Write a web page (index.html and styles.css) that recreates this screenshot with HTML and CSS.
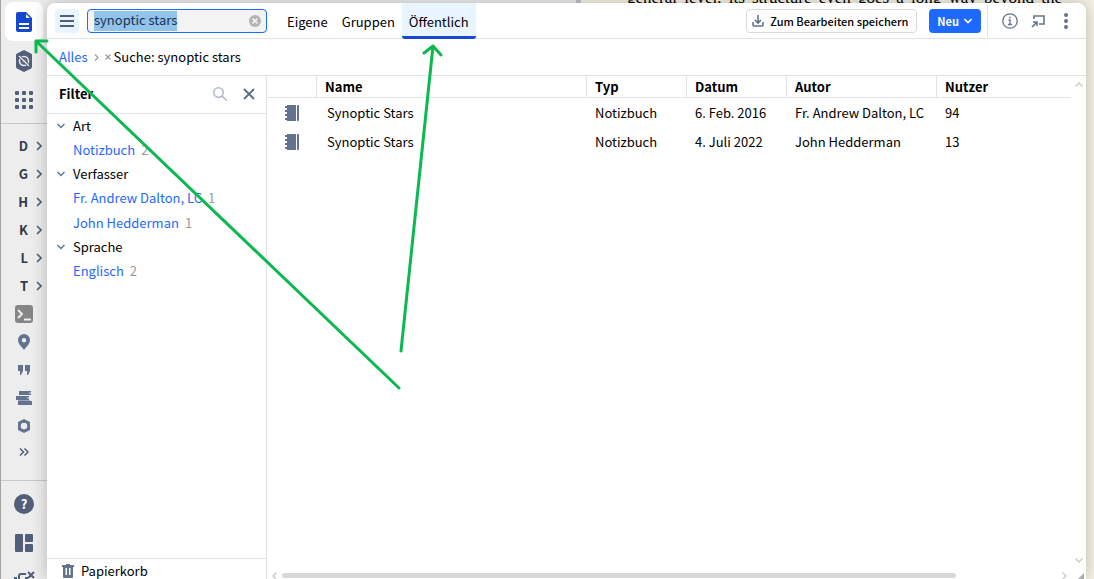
FILE: index.html
```html
<!DOCTYPE html>
<html lang="de">
<head>
<meta charset="utf-8">
<title>Dokumente</title>
<link rel="stylesheet" href="styles.css">
</head>
<body>
<div class="app">
  <div class="backdrop" aria-hidden="true">
    <div class="backdrop-gutter"></div>
    <div class="backdrop-page"><p>general level, its structure even goes a long way beyond the</p></div>
  </div>

  <nav class="rail">
    <div class="rail-top">
      <button class="tool tool-active" aria-label="Dokumente"><svg width="18" height="22" viewBox="0 0 18 22"><path fill="#1548cf" d="M3 1h8l6 6v12a2 2 0 0 1-2 2H3a2 2 0 0 1-2-2V3a2 2 0 0 1 2-2z"/><path stroke="#fff" stroke-width="2" d="M4 13h10M4 17h10"/><path fill="#fff" d="M11 3v4h4z"/></svg></button>
      <button class="tool" aria-label="Factbook"><svg width="18" height="22" viewBox="0 0 18 22"><path fill="#525f79" d="M9 0l7 3.500q1 .6 1 1.500v12q0 .9-1 1.500L9 22l-7-3.500q-1-.6-1-1.500V5q0-.9 1-1.500z"/><circle cx="9" cy="11" r="4.500" fill="none" stroke="#eee" stroke-width="1.500"/><circle cx="9" cy="11" r="1.800" fill="#eee"/><path stroke="#525f79" stroke-width="3" d="M4 6l10 10"/><path stroke="#eee" stroke-width="1.300" d="M4 6l10 10"/></svg></button>
      <button class="tool" aria-label="Werkzeuge"><svg width="20" height="20" viewBox="0 0 20 20" fill="#525f79"><rect x="1" y="1" width="4" height="4" rx="1"/><rect x="8" y="1" width="4" height="4" rx="1"/><rect x="15" y="1" width="4" height="4" rx="1"/><rect x="1" y="8" width="4" height="4" rx="1"/><rect x="8" y="8" width="4" height="4" rx="1"/><rect x="15" y="8" width="4" height="4" rx="1"/><rect x="1" y="15" width="4" height="4" rx="1"/><rect x="8" y="15" width="4" height="4" rx="1"/><rect x="15" y="15" width="4" height="4" rx="1"/></svg></button>
    </div>
    <div class="rail-mid">
      <button class="short letter">D<svg class="chev" width="6" height="10" viewBox="0 0 6 10"><path d="M1 1l4 4-4 4"/></svg></button>
      <button class="short letter">G<svg class="chev" width="6" height="10" viewBox="0 0 6 10"><path d="M1 1l4 4-4 4"/></svg></button>
      <button class="short letter">H<svg class="chev" width="6" height="10" viewBox="0 0 6 10"><path d="M1 1l4 4-4 4"/></svg></button>
      <button class="short letter">K<svg class="chev" width="6" height="10" viewBox="0 0 6 10"><path d="M1 1l4 4-4 4"/></svg></button>
      <button class="short letter">L<svg class="chev" width="6" height="10" viewBox="0 0 6 10"><path d="M1 1l4 4-4 4"/></svg></button>
      <button class="short letter">T<svg class="chev" width="6" height="10" viewBox="0 0 6 10"><path d="M1 1l4 4-4 4"/></svg></button>
      <button class="short" aria-label="Befehl"><svg width="18" height="18" viewBox="0 0 18 18"><rect width="18" height="18" rx="3" fill="#858585"/><path fill="none" stroke="#eee" stroke-width="1.900" d="M3 5l4 4-4 4M9 14.500h7"/></svg></button>
      <button class="short" aria-label="Atlas"><svg width="12" height="16" viewBox="0 0 12 16"><path fill="#63738f" fill-rule="evenodd" d="M6 0a6 6 0 0 1 6 6c0 4-4 7-6 10-2-3-6-6-6-10a6 6 0 0 1 6-6zm0 4a2.200 2.200 0 1 0 0 4.400A2.200 2.200 0 0 0 6 4z"/></svg></button>
      <button class="short" aria-label="Zitate"><svg width="12" height="10" viewBox="0 0 12 10" fill="#63738f"><path d="M0 0h5v6l-2 4H2V6H0zM7 0h5v6l-2 4H9V6H7z"/></svg></button>
      <button class="short" aria-label="Bücher"><svg width="16" height="14" viewBox="0 0 16 14"><path fill="#63738f" d="M3 0h12v4H3zM0 5h13v4H0zM2 10h14v4H2z"/><path fill="#9aa6ba" d="M13 1h2v2h-2zM11 6h2v2h-2zM2 9h12v1H2z"/></svg></button>
      <button class="short" aria-label="Sechseck"><svg width="14" height="14" viewBox="0 0 14 14"><path fill="#63738f" fill-rule="evenodd" d="M7 0l6 3v8l-6 3-6-3V3zM7 3.700a3.300 3.300 0 1 0 0 6.600 3.300 3.300 0 0 0 0-6.600z"/></svg></button>
      <button class="short more" aria-label="Mehr"><svg width="10" height="8" viewBox="0 0 10 8"><path fill="none" stroke="#525f79" stroke-width="1.500" d="M1 .5L4.500 4 1 7.500M5.500 .5L9 4 5.500 7.500"/></svg></button>
    </div>
    <div class="rail-bottom">
      <button class="tool" aria-label="Hilfe"><span class="help">?</span></button>
      <button class="tool" aria-label="Layouts"><svg width="18" height="18" viewBox="0 0 18 18" fill="#525f79"><rect width="8" height="18" rx="1"/><rect x="10" width="8" height="8" rx="1"/><rect x="10" y="10" width="8" height="8" rx="1"/></svg></button>
      <button class="tool" aria-label="Schließen"><svg width="22" height="22" viewBox="0 0 22 22" fill="none" stroke="#525f79" stroke-width="2"><path d="M6 12V5q0-2 2-2h5M15 1l6 6M21 1l-6 6M1 7h3M12 7h3"/></svg></button>
    </div>
  </nav>

  <main class="panel">
    <header class="toolbar">
      <button class="menu" aria-label="Menü"><svg width="14" height="12" viewBox="0 0 14 12"><path stroke="#4d6080" stroke-width="2" d="M0 1h14M0 6h14M0 11h14"/></svg></button>
      <div class="search">
        <label class="search-box"><mark class="selection">synoptic stars</mark><input class="search-input" type="text" aria-label="Suche"></label>
        <button class="clear" aria-label="Löschen"><svg width="12" height="12" viewBox="0 0 12 12"><circle cx="6" cy="6" r="6" fill="#b3b3b3"/><path stroke="#f3f3f3" stroke-width="1.600" d="M3.500 3.500l5 5M8.500 3.500l-5 5"/></svg></button>
      </div>
      <div class="tabs">
        <button class="tab">Eigene</button>
        <button class="tab">Gruppen</button>
        <button class="tab tab-current">Öffentlich</button>
      </div>
      <button class="save"><svg width="12" height="12" viewBox="0 0 12 12" fill="none" stroke="#63738f" stroke-width="1.600"><path d="M6 0v8M3 5l3 3 3-3M1 7v3q0 1 1 1h8q1 0 1-1V7"/></svg>Zum Bearbeiten speichern</button>
      <button class="new">Neu<svg width="8" height="6" viewBox="0 0 8 6" fill="none" stroke="#fff" stroke-width="1.600"><path d="M.5 1L4 4.500 7.500 1"/></svg></button>
      <div class="actions">
        <button class="action" aria-label="Info"><svg width="16" height="16" viewBox="0 0 16 16" fill="none" stroke="#63738f" stroke-width="1.300"><circle cx="8" cy="8" r="7.200"/><path d="M6.500 7H8v4.500M6 11.500h4M7.200 4.500h1.600" /></svg></button>
        <button class="action" aria-label="Ablösen"><svg width="14" height="14" viewBox="0 0 14 14" fill="none" stroke="#63738f" stroke-width="1.600"><path d="M3 5V2h10v8H8M1 13l5-5M2 8h4v4"/></svg></button>
        <button class="action" aria-label="Optionen"><svg width="4" height="16" viewBox="0 0 4 16" fill="#63738f"><circle cx="2" cy="2" r="2"/><circle cx="2" cy="8" r="2"/><circle cx="2" cy="14" r="2"/></svg></button>
      </div>
    </header>

    <div class="crumbs">
      <a href="#">Alles</a>
      <svg width="5" height="7" viewBox="0 0 5 7"><path fill="none" stroke="#999" stroke-width="1.200" d="M1 .5l3 3-3 3"/></svg>
      <button class="crumb"><svg width="6" height="6" viewBox="0 0 6 6"><path stroke="#999" stroke-width="1.200" d="M.5 .5l5 5M5.500 .5l-5 5"/></svg>Suche: synoptic stars</button>
    </div>

    <div class="body">
      <aside class="filter">
        <div class="filter-head">
          <h2>Filter</h2>
          <button class="plain" aria-label="Filter suchen"><svg width="14" height="14" viewBox="0 0 14 14" fill="none" stroke="#b3bac8" stroke-width="1.600"><circle cx="5.500" cy="5.500" r="4.700"/><path d="M9 9l4.500 4.500"/></svg></button>
          <button class="plain" aria-label="Filter schließen"><svg width="12" height="12" viewBox="0 0 12 12"><path stroke="#5b6c8a" stroke-width="1.800" d="M1 1l10 10M11 1L1 11"/></svg></button>
        </div>
        <div class="facets">
          <button class="facet"><svg width="8" height="6" viewBox="0 0 8 6"><path d="M.5 1L4 4.500 7.500 1"/></svg>Art</button>
          <div class="value"><a href="#">Notizbuch</a><span>2</span></div>
          <button class="facet"><svg width="8" height="6" viewBox="0 0 8 6"><path d="M.5 1L4 4.500 7.500 1"/></svg>Verfasser</button>
          <div class="value"><a href="#">Fr. Andrew Dalton, LC</a><span>1</span></div>
          <div class="value"><a href="#">John Hedderman</a><span>1</span></div>
          <button class="facet"><svg width="8" height="6" viewBox="0 0 8 6"><path d="M.5 1L4 4.500 7.500 1"/></svg>Sprache</button>
          <div class="value"><a href="#">Englisch</a><span>2</span></div>
        </div>
        <button class="trash"><svg width="12" height="14" viewBox="0 0 12 14"><path fill="#63738f" fill-rule="evenodd" d="M4 0h4v1h4v2h-1v10q0 1-1 1H2q-1 0-1-1V3H0V1h4zM3.500 4v7H5V4zM7 4v7h1.500V4z"/></svg>Papierkorb</button>
      </aside>

      <section class="results">
        <div class="results-main">
          <table>
            <colgroup><col class="c-icon"><col class="c-name"><col class="c-type"><col class="c-type"><col class="c-author"><col></colgroup>
            <thead><tr><th></th><th>Name</th><th>Typ</th><th>Datum</th><th>Autor</th><th>Nutzer</th></tr></thead>
            <tbody>
              <tr><td class="book"><svg width="14" height="16" viewBox="0 0 14 16" fill="#63738f"><path d="M2 0h9v16H2v-1H0v-2h2v-2H0V9h2V7H0V5h2V3H0V1h2zM12 0h1q1 0 1 1v14q0 1-1 1h-1z"/></svg></td><td class="name">Synoptic Stars</td><td>Notizbuch</td><td>6. Feb. 2016</td><td>Fr. Andrew Dalton, LC</td><td>94</td></tr>
              <tr><td class="book"><svg width="14" height="16" viewBox="0 0 14 16" fill="#63738f"><path d="M2 0h9v16H2v-1H0v-2h2v-2H0V9h2V7H0V5h2V3H0V1h2zM12 0h1q1 0 1 1v14q0 1-1 1h-1z"/></svg></td><td class="name">Synoptic Stars</td><td>Notizbuch</td><td>4. Juli 2022</td><td>John Hedderman</td><td>13</td></tr>
            </tbody>
          </table>
          <div class="vscroll"><svg width="8" height="5" viewBox="0 0 8 5"><path d="M.5 4.500L4 1l3.500 3.500"/></svg><svg width="8" height="5" viewBox="0 0 8 5"><path d="M.5 .5L4 4 7.500 .5"/></svg></div>
        </div>
        <div class="hscroll"><svg width="5" height="8" viewBox="0 0 5 8"><path d="M4.500 .5L1 4l3.500 3.500"/></svg><div class="track"><div class="thumb"></div></div><svg width="5" height="8" viewBox="0 0 5 8"><path d="M.5 .5L4 4 .5 7.500"/></svg><svg class="grip" width="6" height="6" viewBox="0 0 6 6"><path d="M6 0v6H0z"/></svg></div>
      </section>
    </div>
  </main>

  <svg class="arrows" width="460" height="400" viewBox="0 0 460 400" aria-hidden="true"><path d="M399 388L36 41M47 41H36V52M401 351L433 46M424 53l9-7 8 9"/></svg>
</div>
</body>
</html>
```

FILE: styles.css
```css
* { box-sizing: border-box; }
body {
  margin: 0;
  font: 400 13px/20px "Noto Sans CJK SC", "Noto Sans", sans-serif;
  color: #000;
}
button {
  margin: 0;
  padding: 0;
  border: 0;
  background: none;
  font: inherit;
  color: inherit;
}
svg { display: block; flex: none; }
a { color: #1e69ff; text-decoration: none; }

.app {
  position: relative;
  display: flex;
  height: 100vh;
  overflow: hidden;
  padding-right: 8px;
  background: #ededed;
  border-left: 1px solid #a3a3a3;
}

/* document lying behind the open panel */
.backdrop {
  position: absolute;
  inset: 0;
  display: grid;
  grid-template-columns: 585fr 508fr;
}
.backdrop-gutter {
  border-right: 5px solid #f2f2f2;
  background: linear-gradient(to left, #c4c4c4 5px, #ededed 5px);
}
.backdrop-page {
  overflow: hidden;
  background: #f5f1e4;
  font: 17px/20px "Liberation Serif", serif;
}
.backdrop-page p {
  width: 435px;
  margin: -12px 0 0 41px;
  text-align: justify;
  text-align-last: justify;
  white-space: nowrap;
}

.rail {
  position: relative;
  flex: none;
  width: 46px;
  background: #ededed;
}
.rail-top {
  padding: 2px 0 4px;
  border-bottom: 1px solid #c8c8c8;
}
.tool {
  display: flex;
  align-items: center;
  justify-content: center;
  width: 38px;
  height: 39px;
  margin: 0 4px;
}
.tool-active { border-radius: 8px; background: #fff; }
.rail-mid {
  padding: 8px 0 16px;
  border-bottom: 1px solid #c8c8c8;
}
.short {
  display: flex;
  align-items: center;
  justify-content: center;
  width: 46px;
  height: 28px;
}
.letter {
  justify-content: flex-end;
  gap: 8px;
  padding-right: 5px;
  font-weight: 700;
  color: #333b48;
}
.chev { fill: none; stroke: #525f79; stroke-width: 1.6; }
.more { height: 24px; }
.rail-bottom { padding-top: 3px; }
.help {
  width: 20px;
  height: 20px;
  border-radius: 50%;
  background: #525f79;
  color: #fff;
  font-weight: 700;
}

.panel {
  position: relative;
  flex: 1;
  min-width: 0;
  display: flex;
  flex-direction: column;
  margin-top: 3px;
  border-radius: 8px 8px 0 0;
  background: #fff;
  box-shadow: 0 0 16px rgba(0, 0, 0, .24);
}

.toolbar {
  display: flex;
  align-items: center;
  height: 36px;
  padding-left: 8px;
  border-bottom: 1px solid #e3e3e3;
}
.menu {
  display: flex;
  align-items: center;
  justify-content: center;
  width: 24px;
  height: 24px;
  margin-right: 8px;
  border-radius: 3px;
  background: #e8f5ff;
}
.search {
  display: flex;
  align-items: center;
  width: 180px;
  height: 24px;
  padding: 0 5px 0 6px;
  border: 1px solid #1e69ff;
  border-radius: 4px;
  background: #f3f3f3;
}
.search-box { display: flex; flex: 1; min-width: 0; }
.selection {
  flex: none;
  background: #91c3eb;
  color: #17324d;
  line-height: 18px;
}
.search-input {
  flex: 1;
  min-width: 0;
  padding: 0;
  border: 0;
  outline: 0;
  background: none;
  font: inherit;
}
.tabs { display: flex; align-self: stretch; margin: 0 auto 0 13px; }
.tab {
  margin-bottom: -1px;
  padding: 5px 7px 0;
  border-bottom: 3px solid transparent;
}
.tab-current {
  border-color: #1548cf;
  border-radius: 0 0 3px 3px;
  background: #e8f5ff;
}
.save, .new {
  display: flex;
  align-items: center;
  height: 24px;
  border-radius: 4px;
  font-size: 11px;
  font-weight: 700;
}
.save {
  gap: 6px;
  margin-right: 12px;
  padding: 0 8px 0 5px;
  border: 1px solid #d9d9d9;
  font-weight: 500;
}
.new {
  gap: 5px;
  margin-right: 6px;
  padding: 0 9px 0 8px;
  background: #1e69ff;
  color: #fff;
}
.actions {
  display: flex;
  height: 32px;
  padding: 0 6px 0 8px;
  border-left: 1px solid #e3e3e3;
}
.action {
  display: flex;
  align-items: center;
  justify-content: center;
  width: 28px;
}

.crumbs {
  display: flex;
  align-items: center;
  height: 37px;
  padding-left: 12px;
  border-bottom: 1px solid #e3e3e3;
}
.crumbs > svg { margin: 0 6px; }
.crumb { display: flex; align-items: center; gap: 3px; }

.body { display: flex; flex: 1; min-height: 0; }
.filter {
  display: flex;
  flex-direction: column;
  flex: none;
  width: 220px;
  border-right: 1px solid #e3e3e3;
}
.filter-head {
  display: flex;
  align-items: center;
  gap: 16px;
  height: 38px;
  padding: 0 11px 1px 12px;
  border-bottom: 1px solid #e3e3e3;
}
.filter h2 { flex: 1; margin: 0; font-size: 13px; font-weight: 700; }
.facets { flex: 1; }
.facet {
  display: flex;
  align-items: center;
  gap: 8px;
  height: 24px;
  padding-left: 10px;
}
.facet svg { fill: none; stroke: #63738f; stroke-width: 1.5; }
.value { display: flex; gap: 6px; padding: 2px 0 2px 26px; }
.value + .value { padding-top: 3px; }
.value span { color: #999; }
.trash {
  display: flex;
  align-items: center;
  gap: 7px;
  height: 21px;
  padding: 3px 0 0 15px;
  border-top: 1px solid #e3e3e3;
}

.results { display: flex; flex-direction: column; flex: 1; min-width: 0; }
.results-main { display: flex; flex: 1; align-items: flex-start; min-height: 0; }
table {
  flex: 1;
  table-layout: fixed;
  width: 100%;
  border-collapse: separate;
  border-spacing: 0;
}
.c-icon { width: 50px; }
.c-name { width: 270px; }
.c-type { width: 100px; }
.c-author { width: 150px; }
th {
  height: 22px;
  padding: 0 8px;
  border-right: 1px solid #e3e3e3;
  border-bottom: 1px solid #e3e3e3;
  font-weight: 700;
  line-height: 20px;
  text-align: left;
}
th:last-child { border-right: 0; }
td { height: 29px; padding: 0 0 0 8px; white-space: nowrap; }
.book { padding-left: 18px; }
.name { padding-left: 10px; }
.vscroll {
  display: flex;
  flex-direction: column;
  align-items: center;
  justify-content: space-between;
  align-self: stretch;
  width: 15px;
  padding-top: 6px;
}
.vscroll path, .hscroll path { fill: none; stroke: #ccc; stroke-width: 1.5; }
.hscroll {
  display: flex;
  align-items: center;
  gap: 5px;
  height: 16px;
  padding: 9px 2px 0 5px;
}
.track { flex: 1; }
.thumb { width: 87%; height: 5px; border-radius: 3px; background: #d8d8d8; }
.hscroll .grip { margin-left: 6px; }
.hscroll .grip path { fill: #aaa; stroke: none; }

.arrows {
  position: absolute;
  top: 0;
  left: -1px;
  pointer-events: none;
  fill: none;
  stroke: #0cb850;
  stroke-width: 3;
  stroke-linecap: round;
  stroke-linejoin: round;
}
```
